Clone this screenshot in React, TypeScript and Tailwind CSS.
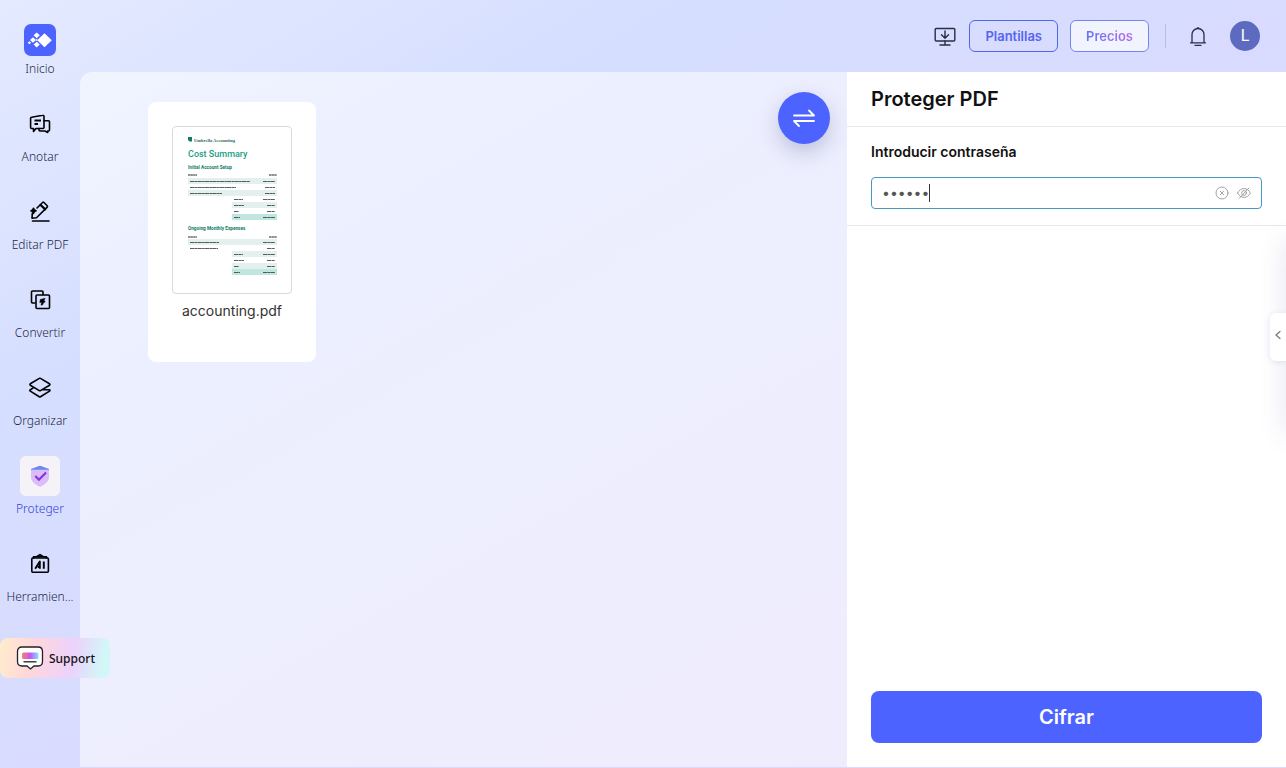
import { useState } from "react";
import type { ReactNode } from "react";

const stroke = {
  fill: "none",
  stroke: "currentColor",
  strokeWidth: 1.6,
  strokeLinecap: "round" as const,
  strokeLinejoin: "round" as const,
};

function AnnotateIcon() {
  return (
    <svg viewBox="0 0 24 24" className="h-6 w-6" {...stroke}>
      <path d="M3.600 5.300 14.800 3.300a1 1 0 0 1 1.200 1v11.200a1 1 0 0 1-1 1H8l-2.500 3v-3H3.600a1 1 0 0 1-1-1V6.300a1 1 0 0 1 1-1z" />
      <path d="M16 8.800h4.500a1 1 0 0 1 1 1V18a1 1 0 0 1-1 1h-.8v1.500L17 19h-5a1 1 0 0 1-1-1v-1.500" />
      <path d="M6.500 8.400h6.500M6.500 12h3.500" strokeWidth="2" strokeLinecap="butt" />
    </svg>
  );
}

function EditIcon() {
  return (
    <svg viewBox="0 0 24 24" className="h-6 w-6" {...stroke}>
      <path d="M9 8 14.600 2.500a1 1 0 0 1 1.400 0l3.200 3.200a1 1 0 0 1 0 1.400L8.500 17.700 4 18.200l.3-5" />
      <path d="m12.600 5 4.600 4.400" strokeWidth="2.200" />
      <path
        d="M5.500 8.200C5.800 10 6.200 10.400 8 10.800 6.200 11.200 5.800 11.600 5.500 13.400 5.200 11.600 4.800 11.200 3 10.800 4.800 10.400 5.200 10 5.500 8.200z"
        fill="currentColor"
      />
      <path d="M4.500 21h16.500" />
    </svg>
  );
}

function ConvertIcon() {
  return (
    <svg viewBox="0 0 24 24" className="h-6 w-6" {...stroke}>
      <path d="M7 15H4.500a1 1 0 0 1-1-1V4a1 1 0 0 1 1-1H14a1 1 0 0 1 1 1v2.500" />
      <rect x="8" y="7" width="13.500" height="13.500" rx="1" />
      <path d="M16.800 10.400 12.400 11.500l-.6 3 1.900-.5-.6 3.200 1.800-.6.600-2.200 1.800-.4-1.200-1.400z" fill="currentColor" strokeWidth=".6" />
    </svg>
  );
}

function OrganizeIcon() {
  return (
    <svg viewBox="0 0 24 24" className="h-6 w-6" {...stroke}>
      <path d="M11.300 2.400a1.200 1.200 0 0 1 1.200 0l9 5.400c.6.400.6 1 0 1.400l-9 5.400a1.200 1.200 0 0 1-1.200 0l-9-5.400c-.5-.4-.5-1 0-1.400z" />
      <path d="m5 12-2.700 1.800c-.6.300-.6.900 0 1.300l9 5.700a1.200 1.200 0 0 0 1.200 0l9-5.700c.6-.4.600-1 0-1.300h-6.500" />
    </svg>
  );
}

function ProtectIcon() {
  return (
    <svg viewBox="0 0 24 24" className="h-6 w-6" fill="none">
      <path d="M12 1.800 21 5v8c0 4.600-4.200 7.800-9 9.800C7.200 20.800 3 17.600 3 13V5z" fill="#d9bdf8" />
      <path d="M12 1.800 21 5v.8H3V5z" fill="#6d86f2" />
      <path d="m7.300 12 3.600 3.800 7.200-7.300" stroke="#8b2fe0" strokeWidth="2.100" />
    </svg>
  );
}

function ToolsIcon() {
  return (
    <svg viewBox="0 0 24 24" className="h-6 w-6" {...stroke}>
      <rect x="3.800" y="6" width="16.600" height="14.200" rx="1" />
      <path d="M5.500 6V4.800h13V6M9 4.500 12 2.600l3 1.900" />
      <path d="m7.200 16.800 4.600-7.200v7.200M9.800 15h2M15.800 9.400v7.400" strokeWidth="1.900" strokeLinecap="butt" />
    </svg>
  );
}

function BrandIcon() {
  return (
    <svg viewBox="0 0 32 32" className="h-8 w-8" fill="#fff">
      <rect width="32" height="32" rx="7" fill="#4d63ff" />
      <path d="m20.500 9.200 7.300 7-7.300 7-7.300-7z" />
      <path d="m12.700 8.500 3.100 2.800-3.100 2.900-3.100-2.900zM9 13.200l3 2.800-3 2.800L6 16zM12.700 17.700l3.100 2.900-3.100 2.800-3.100-2.800z" />
      <path d="m5.400 17.200 1.700 1.500-1.700 1.500-1.700-1.500zM12.700 14.900l1.200 1.100-1.200 1.100-1.200-1.100z" />
    </svg>
  );
}

type NavItem = { label: string; icon: ReactNode; active?: boolean };

const navItems: NavItem[] = [
  { label: "Anotar", icon: <AnnotateIcon /> },
  { label: "Editar PDF", icon: <EditIcon /> },
  { label: "Convertir", icon: <ConvertIcon /> },
  { label: "Organizar", icon: <OrganizeIcon /> },
  { label: "Proteger", icon: <ProtectIcon />, active: true },
  { label: "Herramien...", icon: <ToolsIcon /> },
];

function Sidebar() {
  return (
    <nav className="flex w-20 shrink-0 flex-col gap-[26px] pt-6 font-['Noto_Sans',sans-serif] text-xs leading-[18px] font-light text-[#1c2744]">
      <a href="#inicio" className="flex flex-col items-center gap-1">
        <BrandIcon />
        <span>Inicio</span>
      </a>
      {navItems.map((item) => (
        <a
          key={item.label}
          href="#"
          className={`flex flex-col items-center gap-1 ${item.active ? "text-[#3442dc]" : ""}`}
        >
          <span
            className={`flex h-10 w-10 items-center justify-center rounded-md text-black ${item.active ? "bg-[#f5f3f7]" : ""}`}
          >
            {item.icon}
          </span>
          <span className="whitespace-nowrap">{item.label}</span>
        </a>
      ))}
    </nav>
  );
}

function Header() {
  return (
    <header className="flex h-[72px] shrink-0 items-center justify-end pr-[26px] text-[13px] font-semibold">
      <button aria-label="Descargar" className="mr-3 text-[#2c2c44]">
        <svg viewBox="0 0 24 24" className="h-6 w-6" {...stroke} strokeWidth="1.400">
          <path d="M8.500 4.500H3.200a1 1 0 0 0-1 1v10.500a1 1 0 0 0 1 1h17.600a1 1 0 0 0 1-1V5.500a1 1 0 0 0-1-1h-5.300M8.500 4.500h7" />
          <path d="M12 7v7.200M8.500 10.800l3.500 3.400 3.500-3.400M12 17v4M7 21h10" />
        </svg>
      </button>
      <button className="h-8 rounded-md border border-[#5366e6] px-[15px] pt-px text-[#5664f0]">Plantillas</button>
      <button className="ml-3 h-8 rounded-md border border-[#7385ee] bg-[#f1f4ff] px-[15px] pt-[2px]">
        <span className="bg-linear-to-r from-[#6475f5] to-[#b56be8] bg-clip-text text-transparent">Precios</span>
      </button>
      <span className="ml-4 h-6 w-px bg-[#bcc1e0]" />
      <button aria-label="Notificaciones" className="ml-5 text-[#2c2c44]">
        <svg viewBox="0 0 24 24" className="h-6 w-6" {...stroke} strokeWidth="1.300">
          <path d="M4.500 18.800h15M6 18.500V10.500a6 6 0 0 1 12 0v8M9 21.300h6M11 4.300l1-.6 1 .6" />
        </svg>
      </button>
      <button className="ml-5 h-[30px] w-[30px] rounded-full bg-[#5c6bc0] font-['Roboto',sans-serif] text-base leading-[30px] font-normal text-white">
        L
      </button>
    </header>
  );
}

type Row = { y: number; x?: number; fill?: string; name: number; price: number };

// Line widths stand for the item names and prices of each table row
const rows: Row[] = [
  { y: 51, fill: "#e4f0ee", name: 60, price: 12 },
  { y: 57, name: 46, price: 10 },
  { y: 63, fill: "#e4f0ee", name: 32, price: 10 },
  { y: 69, x: 59, name: 9, price: 12 },
  { y: 75, x: 59, fill: "#e4f0ee", name: 10, price: 8 },
  { y: 81, x: 59, name: 5, price: 8 },
  { y: 87, x: 59, fill: "#bfe6df", name: 6, price: 12 },
  { y: 112, fill: "#e4f0ee", name: 29, price: 12 },
  { y: 118, name: 28, price: 8 },
  { y: 124, x: 59, fill: "#e4f0ee", name: 9, price: 12 },
  { y: 130, x: 59, name: 10, price: 8 },
  { y: 136, x: 59, fill: "#e4f0ee", name: 5, price: 8 },
  { y: 142, x: 59, fill: "#bfe6df", name: 6, price: 12 },
];

function DocumentThumbnail() {
  return (
    <svg viewBox="0 0 118 166" className="w-full" role="img" aria-label="Cost Summary">
      <path d="M15 10h4v4.500h-2.500L15 13z" fill="#157a66" />
      <text x="21" y="14.500" fontSize="4.500" fontWeight="600" fill="#2b6e60" fontFamily="Liberation Serif">
        Umbrella Accounting
      </text>
      <text x="15" y="30" fontSize="9" fontWeight="500" fill="#16a085" fontFamily="Roboto">
        Cost Summary
      </text>
      <text x="15" y="42" fontSize="4.700" fontWeight="700" fill="#0c7d65" fontFamily="Roboto">
        Initial Account Setup
      </text>
      <text x="15" y="103" fontSize="4.700" fontWeight="700" fill="#0c7d65" fontFamily="Roboto">
        Ongoing Monthly Expenses
      </text>
      {[48, 110].map((y) => (
        <path key={y} d={`M15 ${y}h9M96 ${y}h8`} stroke="#222" strokeWidth="1.100" strokeDasharray="2.300 .3" />
      ))}
      {rows.map(({ y, x = 15, fill = "none", name, price }) => (
        <g key={y}>
          <rect x={x} y={y} width={104 - x} height="6" fill={fill} />
          <path
            d={`M${x + 2} ${y + 3.5}h${name}M${102 - price} ${y + 3.5}h${price}`}
            stroke="#2c3836"
            strokeWidth=".8"
            strokeDasharray="4.400 .3 2.500 .2"
          />
        </g>
      ))}
    </svg>
  );
}

function Workspace() {
  return (
    <main className="relative min-w-0 flex-1 rounded-tl-xl bg-linear-150 from-[#eff4ff] via-[#ecefff] via-30% to-[#efecfd] px-[68px] pt-[30px]">
      <figure className="flex h-[260px] w-[168px] flex-col items-center gap-[7px] rounded-lg bg-white px-6 pt-6">
        <div className="w-full rounded border border-[#d9d9d9] bg-white">
          <DocumentThumbnail />
        </div>
        <figcaption className="text-sm text-[#333]">accounting.pdf</figcaption>
      </figure>
      <button
        aria-label="Cambiar archivo"
        className="absolute top-5 right-[17px] flex h-[52px] w-[52px] items-center justify-center rounded-full bg-[#4d63ff] text-white shadow-[0_8px_20px_rgba(60,60,110,0.25)]"
      >
        <svg viewBox="0 0 24 24" className="h-6 w-6" {...stroke} strokeWidth="1.800">
          <path d="M2 9.500h20l-5-5M22 15H2l5 5" />
        </svg>
      </button>
    </main>
  );
}

function ProtectPanel() {
  const [password, setPassword] = useState("123456");
  const [visible, setVisible] = useState(false);

  return (
    <aside className="flex w-[439px] shrink-0 flex-col bg-white text-[#111]">
      <h1 className="border-b border-[#e8e8ec] px-6 py-[13px] text-xl leading-7 font-semibold">Proteger PDF</h1>
      <div className="border-b border-[#e8e8ec] px-6 pt-[15px] pb-4">
        <label htmlFor="password" className="block text-sm leading-5 font-semibold">
          Introducir contraseña
        </label>
        <div className="mt-[15px] flex h-8 items-center rounded border border-[#4796c6] px-[10px]">
          <input
            id="password"
            type={visible ? "text" : "password"}
            value={password}
            onChange={(e) => setPassword(e.target.value)}
            className="[field-sizing:content] text-sm text-[#555] outline-none"
          />
          <span className="h-[18px] w-px bg-[#333]" />
          <button aria-label="Borrar" onClick={() => setPassword("")} className="ml-auto text-[#999]">
            <svg viewBox="0 0 14 14" className="h-[14px] w-[14px]" {...stroke} strokeWidth=".9">
              <circle cx="7" cy="7" r="6" />
              <path d="m5.200 5.200 3.600 3.600M8.800 5.200 5.200 8.800" />
            </svg>
          </button>
          <button aria-label="Mostrar contraseña" onClick={() => setVisible(!visible)} className="ml-2 text-[#999]">
            <svg viewBox="0 0 14 14" className="h-[14px] w-[14px]" {...stroke} strokeWidth=".9">
              <path d="M.6 7C2 4.200 4.300 2.600 7 2.600S12 4.200 13.400 7C12 9.800 9.700 11.400 7 11.400S2 9.800.6 7z" />
              <circle cx="7" cy="7" r="2.400" />
              <path d="M11.800 2 2.400 12.200" />
            </svg>
          </button>
        </div>
      </div>
      <button className="mx-6 mt-auto mb-6 h-[52px] rounded-lg bg-[#4d63ff] text-xl font-semibold text-white">
        Cifrar
      </button>
    </aside>
  );
}

function SupportButton() {
  return (
    <button className="absolute bottom-[90px] left-0 flex h-10 w-[110px] items-center gap-[5px] rounded-lg bg-[linear-gradient(100deg,#ffedcb,#ffd6dc_30%,#ecd2fc_65%,#d2f7f7_92%)] pl-4 font-['Noto_Sans',sans-serif] text-xs font-medium text-[#111]">
      <svg viewBox="0 0 28 26" className="h-[26px] w-7" fill="none">
        <defs>
          <linearGradient id="supportFill">
            <stop stopColor="#ff8068" />
            <stop offset=".5" stopColor="#c455f5" />
            <stop offset="1" stopColor="#80e6ff" />
          </linearGradient>
        </defs>
        <path
          d="M6 2h16c3 0 4.500 1.500 4.500 4.500v10c0 3-1.500 4.500-4.500 4.500h-4l-3.500 3L11 21H6c-3 0-4.500-1.500-4.500-4.500v-10C1.500 3.500 3 2 6 2z"
          fill="#fff"
          stroke="#222"
          strokeWidth="1.300"
        />
        <rect x="6" y="7.500" width="16.500" height="6.500" rx="1.500" fill="url(#supportFill)" />
        <path d="M7.500 16.800h13" stroke="#222" strokeWidth="1.300" />
      </svg>
      <span className="pt-px">Support</span>
    </button>
  );
}

export default function App() {
  return (
    <div className="relative flex min-h-screen overflow-hidden bg-linear-to-br from-[#e4eaff] via-[#d6dfff] via-25% to-[#d9daff] to-60% font-['Inter',sans-serif]">
      <Sidebar />
      <div className="flex min-w-0 flex-1 flex-col pb-px">
        <Header />
        <div className="flex flex-1">
          <Workspace />
          <ProtectPanel />
        </div>
      </div>
      <div className="absolute top-[241px] -right-10 h-[192px] w-10 shadow-[0_0_28px_rgba(80,80,160,0.15)]" />
      <button
        aria-label="Abrir panel"
        className="absolute top-[313px] right-0 flex h-12 w-4 items-center justify-center rounded-l-md bg-white text-[#777] shadow-[0_1px_6px_rgba(80,80,160,0.15)]"
      >
        <svg viewBox="0 0 8 10" className="mb-1 h-[10px] w-2" {...stroke} strokeWidth="1.200">
          <path d="M6 1.500 2 5l4 3.500" />
        </svg>
      </button>
      <SupportButton />
    </div>
  );
}
